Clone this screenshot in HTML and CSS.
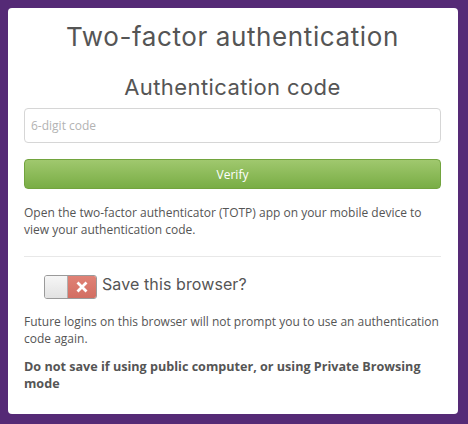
FILE: index.html
```html
<!DOCTYPE html>
<html>
<head>
<meta charset="utf-8">
<link rel="stylesheet" href="styles.css">
</head>
<body>
<div class="card">
  <h1 class="title">Two-factor authentication</h1>
  <h2 class="subtitle">Authentication code</h2>
  <input class="code-input" type="text" placeholder="6-digit code">
  <button class="verify">Verify</button>
  <p class="help">Open the two-factor authenticator (TOTP) app on your mobile device to view your authentication code.</p>
  <div class="divider"></div>
  <div class="save-row">
    <div class="toggle">
      <div class="knob"></div>
      <div class="off">
        <svg width="12" height="12" viewBox="0 0 12 12"><path d="M1.5 1.5 L10.5 10.5 M10.5 1.5 L1.5 10.5" stroke="#fff" stroke-width="2.8" stroke-linecap="butt"/></svg>
      </div>
    </div>
    <span class="save-label">Save this browser?</span>
  </div>
  <p class="note">Future logins on this browser will not prompt you to use an authentication code again.</p>
  <p class="warn">Do not save if using public computer, or using Private Browsing mode</p>
</div>
</body>
</html>
```

FILE: styles.css
```css
html, body {
  margin: 0;
  padding: 0;
}
body {
  background: #552a76;
  padding: 8px 10px 10px 8px;
  height: 424px;
  box-sizing: border-box;
  font-family: "Open Sans", "Liberation Sans", sans-serif;
}
.card {
  background: #fff;
  border-radius: 4px;
  height: 406px;
  box-sizing: border-box;
  padding: 0 17px 0 16px;
  display: flex;
  flex-direction: column;
}
.title {
  font-family: "Inter", "Open Sans", sans-serif;
  font-weight: 400;
  font-size: 26px;
  letter-spacing: 0.6px;
  color: #555;
  text-align: center;
  margin: 13px 0 0;
  line-height: 32px;
}
.subtitle {
  font-family: "Inter", "Open Sans", sans-serif;
  font-weight: 400;
  font-size: 22px;
  letter-spacing: 0.4px;
  color: #555;
  text-align: center;
  margin: 21px 0 0;
  line-height: 26px;
}
.code-input {
  margin-top: 8px;
  height: 35px;
  box-sizing: border-box;
  border: 1px solid #d6d6d6;
  border-radius: 4px;
  padding: 0 6px;
  font-family: "Open Sans", sans-serif;
  font-size: 12px;
  color: #555;
  outline: none;
}
.code-input::placeholder {
  color: #b3b3b3;
}
.verify {
  margin-top: 16px;
  height: 30px;
  border: 1px solid #72a43e;
  border-radius: 4px;
  background: linear-gradient(#a0c86e, #79ad45);
  color: #fff;
  font-family: "Open Sans", sans-serif;
  font-size: 12px;
  font-weight: 400;
  padding: 0;
}
.help, .note, .warn {
  font-size: 12px;
  line-height: 17px;
  color: #555;
  margin: 0;
}
.help {
  margin-top: 15px;
}
.divider {
  margin-top: 18px;
  height: 1px;
  background: #e8e8e8;
}
.save-row {
  display: flex;
  align-items: center;
  margin-top: 18px;
  margin-left: 20px;
}
.toggle {
  display: flex;
  width: 53px;
  height: 24px;
  border: 1px solid #9a9a9a;
  border-radius: 3px;
  box-sizing: border-box;
  overflow: hidden;
}
.knob {
  width: 22px;
  background: linear-gradient(#f6f6f6, #e2e2e2);
  border-right: 1px solid #b0b0b0;
}
.off {
  flex: 1;
  background: linear-gradient(#e08276, #d26e62);
  display: flex;
  align-items: center;
  justify-content: center;
}
.save-label {
  font-family: "Inter", "Open Sans", sans-serif;
  font-size: 16px;
  letter-spacing: 0.1px;
  color: #555;
  margin-left: 5px;
  margin-top: -6px;
}
.note {
  margin-top: 14px;
}
.warn {
  margin-top: 11px;
  font-size: 12.6px;
  font-weight: 700;
}
```
